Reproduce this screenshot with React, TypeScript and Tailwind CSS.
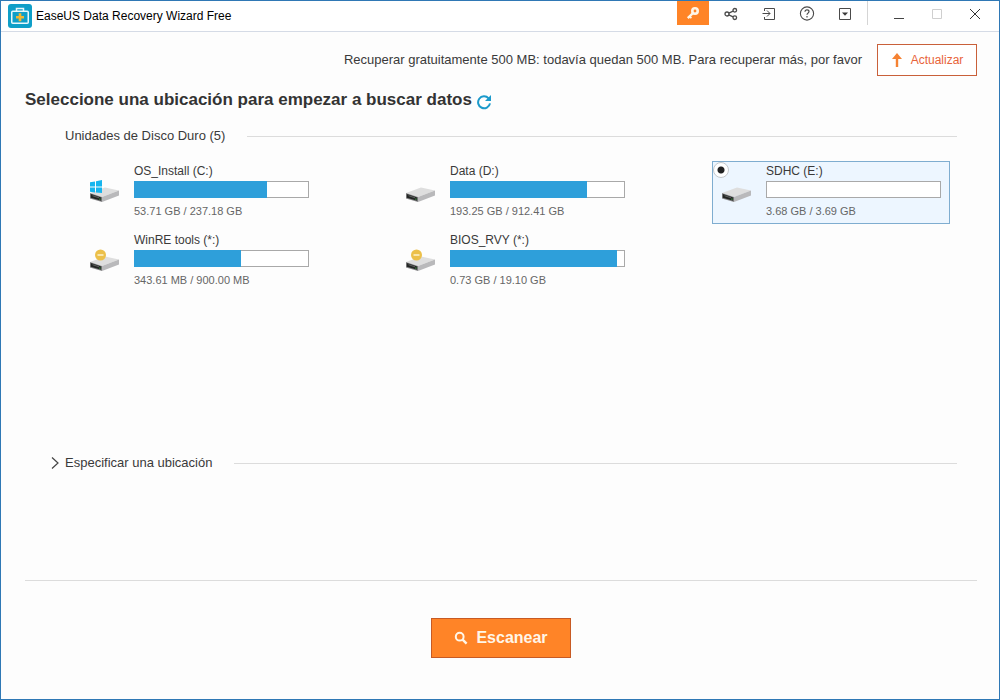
import React, { useState } from 'react';

interface Drive {
  id: string;
  name: string;
  usage: string;
  fill: number;
  badge?: 'windows' | 'hidden';
}

const DRIVES: Drive[] = [
  { id: 'c', name: 'OS_Install (C:)', usage: '53.71 GB / 237.18 GB', fill: 77, badge: 'windows' },
  { id: 'd', name: 'Data (D:)', usage: '193.25 GB / 912.41 GB', fill: 79 },
  { id: 'e', name: 'SDHC (E:)', usage: '3.68 GB / 3.69 GB', fill: 0 },
  { id: 'winre', name: 'WinRE tools (*:)', usage: '343.61 MB / 900.00 MB', fill: 62, badge: 'hidden' },
  { id: 'bios', name: 'BIOS_RVY (*:)', usage: '0.73 GB / 19.10 GB', fill: 96.5, badge: 'hidden' },
];

const LogoIcon = () => (
  <svg width="24" height="24" viewBox="0 0 24 24" fill="none" aria-hidden="true">
    <rect width="24" height="24" rx="3" fill="#0f9fc8" />
    <path d="M8.5 7V4.5h7V7" stroke="#e9f7fb" strokeWidth="1.5" />
    <rect x="3.75" y="7.25" width="16.5" height="12" rx="1" stroke="#e9f7fb" strokeWidth="1.5" />
    <path d="M12 9.2v8M8 13.2h8" stroke="#f2b632" strokeWidth="2.6" />
  </svg>
);

const KeyIcon = () => (
  <svg width="14" height="14" viewBox="0 0 14 14" fill="none" aria-hidden="true">
    <circle cx="9" cy="5" r="2.7" stroke="#fff6e8" strokeWidth="2.6" />
    <path d="M7 7 1.8 12.2" stroke="#fff6e8" strokeWidth="2.4" />
    <path d="m3 9.800 2.400 2.400" stroke="#fff6e8" strokeWidth="1.800" />
  </svg>
);

const ShareIcon = () => (
  <svg width="14" height="14" viewBox="0 0 14 14" fill="none" stroke="#4a4a4a" strokeWidth="1.3" aria-hidden="true">
    <circle cx="3" cy="7" r="2" />
    <circle cx="10.8" cy="3.3" r="1.8" />
    <circle cx="10.8" cy="10.7" r="1.8" />
    <path d="M4.8 6.1 9.1 4.1M4.8 7.9l4.3 2" />
  </svg>
);

const ImportIcon = () => (
  <svg width="14" height="14" viewBox="0 0 14 14" fill="none" stroke="#4a4a4a" aria-hidden="true">
    <path d="M2.5 4V1.5h10v11h-10V10M.5 6.500h7.500M5 3.500l3 3-3 3" />
  </svg>
);

const HelpIcon = () => (
  <svg width="16" height="16" viewBox="0 0 16 16" fill="none" stroke="#4a4a4a" aria-hidden="true">
    <circle cx="8" cy="7.500" r="6.600" strokeWidth="1.100" />
    <path d="M6 5.800C6 4.500 6.800 3.800 8 3.800s2 .7 2 1.800c0 1.500-2 1.600-2 3.200M8 10.100v1.300" strokeWidth="1.200" />
  </svg>
);

const MenuIcon = () => (
  <svg width="14" height="14" viewBox="0 0 14 14" aria-hidden="true">
    <path d="M1.500 1.500h11v11h-11z" fill="none" stroke="#4a4a4a" />
    <path d="M4 5.500h6L7 8.800z" fill="#3a3a3a" />
  </svg>
);

const MinimizeIcon = () => (
  <svg width="12" height="12" viewBox="0 0 12 12" stroke="#444" aria-hidden="true">
    <path d="M1 10.500h10" />
  </svg>
);

const MaximizeIcon = () => (
  <svg width="12" height="12" viewBox="0 0 12 12" fill="none" stroke="#cfcfcf" aria-hidden="true">
    <path d="M1.500 1.500h9v9h-9z" />
  </svg>
);

const CloseIcon = () => (
  <svg width="12" height="12" viewBox="0 0 12 12" stroke="#333" aria-hidden="true">
    <path d="m1 1 10 10M11 1 1 11" />
  </svg>
);

const UpgradeArrow = () => (
  <svg width="12" height="14" viewBox="0 0 12 14" aria-hidden="true">
    <path d="M6 0 11 6H7.200v8H4.800V6H1z" fill="#f58233" />
  </svg>
);

const RefreshIcon = () => (
  <svg width="16" height="16" viewBox="0 0 16 16" aria-hidden="true">
    <path d="M12.600 4.300A6 6 0 1 0 14 9.400" fill="none" stroke="#1b9acb" strokeWidth="2" />
    <path d="M15 1v6H9z" fill="#1b9acb" />
  </svg>
);

const SearchIcon = () => (
  <svg width="14" height="14" viewBox="0 0 14 14" fill="none" stroke="#fff6e8" aria-hidden="true">
    <circle cx="5.700" cy="5.700" r="3.900" strokeWidth="2" />
    <path d="m8.600 8.600 4 4" strokeWidth="2.400" />
  </svg>
);

const DriveIcon: React.FC<{ badge?: Drive['badge'] }> = ({ badge }) => (
  <svg width="30" height="24" viewBox="0 0 30 24" aria-hidden="true">
    <path d="M0 13 15 7.500l14 3L12 17z" fill="#dedede" />
    <path d="M12 17 29 10.500v5L12 22z" fill="#b9b9bb" />
    <path d="M0 13l12 4v5L0 18.500z" fill="#858587" />
    <path d="m.8 14 10.400 3.500v3.300L.8 17.800z" fill="#222423" />
    <path d="m2.500 15.700 6.500 2.100" stroke="#5d605e" />
    <path d="M9.300 18.500h1.200v1.200H9.300z" fill="#3f9a45" />
    {badge === 'windows' && (
      <path d="M0 2.200 5 1.400V6.500H0zM6 1.200 12 0v6.500H6zM0 7.500h5v5.100l-5-.8zM6 7.500h6V13l-6-.5z" fill="#17b5ee" />
    )}
    {badge === 'hidden' && (
      <>
        <circle cx="10.500" cy="6" r="5.500" fill="#ecc04a" />
        <path d="M7.500 6h6" stroke="#fff6d8" strokeWidth="1.400" />
      </>
    )}
  </svg>
);

interface TitleButtonProps {
  label: string;
  children: React.ReactNode;
}

const TitleButton: React.FC<TitleButtonProps> = ({ label, children }) => (
  <button type="button" aria-label={label} className="flex h-[26px] w-8 items-center justify-center hover:bg-gray-100">
    {children}
  </button>
);

interface DriveCardProps {
  drive: Drive;
  selected: boolean;
  onSelect: (id: string) => void;
}

const DriveCard: React.FC<DriveCardProps> = ({ drive, selected, onSelect }) => (
  <label
    className={`relative flex cursor-pointer border pr-2 pb-[3px] ${
      selected ? 'border-[#7fadd0] bg-[#edf6ff]' : 'border-transparent'
    }`}
  >
    <input
      type="radio"
      name="drive"
      checked={selected}
      onChange={() => onSelect(drive.id)}
      className="absolute top-0 left-0 h-4 w-4 appearance-none rounded-full border border-[#c4c8cc] bg-white opacity-0 checked:bg-[radial-gradient(circle,#222_3px,transparent_4px)] checked:opacity-100"
    />
    <div className="w-[53px] shrink-0 pt-[18px] pl-[9px]">
      <DriveIcon badge={drive.badge} />
    </div>
    <div className="min-w-0 flex-1">
      <div className="text-[12px] leading-[19px] text-[#3a3a3a]">{drive.name}</div>
      <div className="h-[17px] border border-[#a9a9a9] bg-white">
        <div className="-m-px h-[17px] bg-[#2e9fda]" style={{ width: `${drive.fill}%` }} />
      </div>
      <div className="pt-1 text-[11px] leading-[18px] text-[#666]">{drive.usage}</div>
    </div>
  </label>
);

const App: React.FC = () => {
  const [selectedId, setSelectedId] = useState('e');

  return (
    <div className="flex min-h-screen flex-col border border-[#2f78b5] bg-[#fdfdfd] font-['Liberation_Sans',Arial,sans-serif] text-[#3a3a3a]">
      <header className="flex h-[31px] items-start justify-between border-b border-[#d5dbe6] bg-white pr-2 pl-[7px]">
        <div className="flex items-center gap-1 pt-[3px]">
          <LogoIcon />
          <span className="text-[12px] text-black">EaseUS Data Recovery Wizard Free</span>
        </div>
        <div className="flex items-start gap-[6px]">
          <button
            type="button"
            aria-label="Activar"
            className="flex h-6 w-8 items-center justify-center bg-[#ff8427]"
          >
            <KeyIcon />
          </button>
          <TitleButton label="Compartir"><ShareIcon /></TitleButton>
          <TitleButton label="Importar"><ImportIcon /></TitleButton>
          <TitleButton label="Ayuda"><HelpIcon /></TitleButton>
          <TitleButton label="Menú"><MenuIcon /></TitleButton>
          <div className="mr-[9px] h-6 w-px bg-[#d5d5d5]" />
          <TitleButton label="Minimizar"><MinimizeIcon /></TitleButton>
          <TitleButton label="Maximizar"><MaximizeIcon /></TitleButton>
          <TitleButton label="Cerrar"><CloseIcon /></TitleButton>
        </div>
      </header>

      <main className="flex flex-1 flex-col pr-[22px] pl-6">
        <div className="flex items-center justify-end gap-[15px] pt-3">
          <p className="text-[13px]">
            Recuperar gratuitamente 500 MB: todavía quedan 500 MB. Para recuperar más, por favor
          </p>
          <button
            type="button"
            className="flex h-8 w-[100px] items-center justify-center gap-2 border border-[#c9603a] bg-white text-[12px] text-[#e8643a]"
          >
            <UpgradeArrow />
            Actualizar
          </button>
        </div>

        <div className="flex items-center gap-1 pt-3">
          <h1 className="text-[17px] leading-6 font-bold text-[#333]">
            Seleccione una ubicación para empezar a buscar datos
          </h1>
          <button type="button" aria-label="Actualizar lista" className="pt-1">
            <RefreshIcon />
          </button>
        </div>

        <section className="min-h-[337px] pt-[14px] pr-5 pl-10">
          <div className="flex items-center gap-[22px]">
            <h2 className="text-[13px] leading-5">Unidades de Disco Duro (5)</h2>
            <div className="h-px flex-1 bg-[#dcdcdc]" />
          </div>
          <div className="grid grid-cols-3 gap-x-[78px] gap-y-[6px] pt-[15px] pr-[7px] pl-[15px]">
            {DRIVES.map((drive) => (
              <DriveCard
                key={drive.id}
                drive={drive}
                selected={drive.id === selectedId}
                onSelect={setSelectedId}
              />
            ))}
          </div>
        </section>

        <section className="flex items-center gap-[22px] pt-1 pr-5 pl-6">
          <button type="button" className="flex items-center gap-1 text-[13px] leading-5">
            <svg width="12" height="12" viewBox="0 0 12 12" fill="none" stroke="#444" aria-hidden="true">
              <path d="m3 .5 6 5.500-6 5.500" strokeWidth="1.200" />
            </svg>
            Especificar una ubicación
          </button>
          <div className="h-px flex-1 bg-[#dcdcdc]" />
        </section>

        <footer className="mt-auto flex justify-center border-t border-[#dcdcdc] pt-[37px] pb-[41px]">
          <button
            type="button"
            className="flex h-10 w-[140px] items-center justify-center gap-2 border border-[#c75a24] bg-[#ff8427] text-[16px] font-bold text-[#fff6e8]"
          >
            <SearchIcon />
            Escanear
          </button>
        </footer>
      </main>
    </div>
  );
};

export default App;
